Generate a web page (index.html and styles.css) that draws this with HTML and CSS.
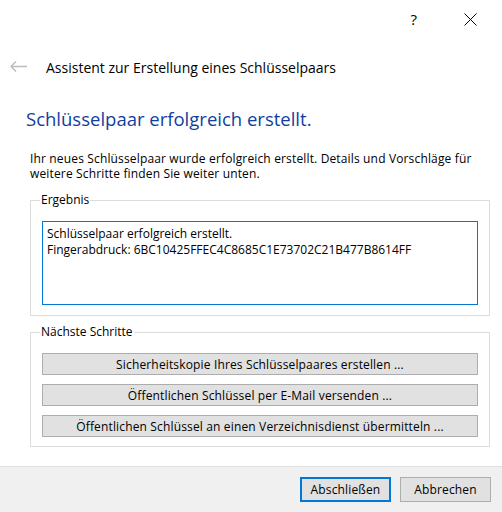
FILE: index.html
```html
<!DOCTYPE html>
<html lang="de">
<head>
<meta charset="utf-8">
<title>Assistent zur Erstellung eines Schlüsselpaars</title>
<link rel="stylesheet" href="styles.css">
</head>
<body>
<div class="dialog">
  <div class="topbar">
    <span class="help">?</span>
    <svg class="close" width="13" height="13" viewBox="0 0 13 13" aria-hidden="true">
      <path d="M0.5 0.5 L12.5 12.5 M12.5 0.5 L0.5 12.5" stroke="#000" stroke-width="1" fill="none"/>
    </svg>
  </div>
  <div class="titlerow">
    <svg class="back" width="17" height="11" viewBox="0 0 17 11" aria-hidden="true">
      <path d="M1 5.5 H17 M1 5.5 L6 0.5 M1 5.5 L6 10.5" stroke="#bdbdbd" stroke-width="1.5" fill="none"/>
    </svg>
    <span class="title">Assistent zur Erstellung eines Schlüsselpaars</span>
  </div>
  <main class="content">
    <h1 class="heading">Schlüsselpaar erfolgreich erstellt.</h1>
    <p class="intro">Ihr neues Schlüsselpaar wurde erfolgreich erstellt. Details und Vorschläge für weitere Schritte finden Sie weiter unten.</p>
    <fieldset class="group">
      <legend class="group-label">Ergebnis</legend>
      <div class="result">Schlüsselpaar erfolgreich erstellt.<br>Fingerabdruck: 6BC10425FFEC4C8685C1E73702C21B477B8614FF</div>
    </fieldset>
    <fieldset class="group group-steps">
      <legend class="group-label">Nächste Schritte</legend>
      <div class="steps">
        <button class="step-btn" type="button">Sicherheitskopie Ihres Schlüsselpaares erstellen ...</button>
        <button class="step-btn" type="button">Öffentlichen Schlüssel per E-Mail versenden ...</button>
        <button class="step-btn" type="button">Öffentlichen Schlüssel an einen Verzeichnisdienst übermitteln ...</button>
      </div>
    </fieldset>
  </main>
  <footer class="footer">
    <button class="btn btn-default" type="button">Abschließen</button>
    <button class="btn" type="button">Abbrechen</button>
  </footer>
</div>
</body>
</html>
```
FILE: styles.css
```css
html, body {
  margin: 0;
  padding: 0;
  background: #ffffff;
}

body {
  font-family: "Open Sans", "Liberation Sans", Arial, sans-serif;
  font-size: 12px;
  letter-spacing: 0.1px;
  color: #000000;
}

.dialog {
  display: flex;
  flex-direction: column;
  width: 502px;
  height: 512px;
  overflow: hidden;
}

.topbar {
  height: 38px;
  display: flex;
  align-items: center;
  justify-content: flex-end;
  gap: 47px;
  padding-right: 25px;
}

.help {
  font-size: 15px;
  line-height: 1;
  letter-spacing: 0;
  color: #000;
}

.close {
  display: block;
}

.titlerow {
  height: 24px;
  margin-top: 17px;
  display: flex;
  align-items: center;
}

.back {
  display: block;
  margin-left: 10px;
  margin-right: 19px;
  margin-bottom: 2px;
}

.title {
  font-size: 14px;
  letter-spacing: 0;
  color: #000;
}

.content {
  padding: 0 12px 0 30px;
}

.heading {
  margin: 26px 0 18px -4px;
  font-size: 18.5px;
  letter-spacing: 0;
  line-height: 28px;
  font-weight: normal;
  color: #123e9e;
}

.intro {
  margin: 0 0 11px 0;
  line-height: 15px;
  letter-spacing: 0.15px;
}

.group {
  margin: 0;
  padding: 13px 11px 10px 11px;
  border: 1px solid #dcdcdc;
  min-width: 0;
}

.group-steps {
  margin-top: 8px;
  padding-bottom: 9px;
}

.group-label {
  margin-left: -2px;
  padding: 0 1px;
  line-height: 16px;
  font-size: 12px;
  letter-spacing: 0;
}

.result {
  box-sizing: border-box;
  height: 84px;
  border: 1px solid #0078d7;
  padding: 4px 4px;
  line-height: 16px;
  letter-spacing: 0;
}

.steps {
  display: flex;
  flex-direction: column;
  gap: 9px;
}

.step-btn,
.btn {
  font-family: inherit;
  font-size: 12px;
  letter-spacing: 0.15px;
  color: #000;
  background: #e1e1e1;
  border: 1px solid #adadad;
  border-radius: 0;
  padding: 0;
  margin: 0;
}

.step-btn {
  height: 22px;
  width: 100%;
}

.footer {
  margin-top: auto;
  box-sizing: border-box;
  height: 46px;
  border-top: 1px solid #dfdfdf;
  background: #f0f0f0;
  display: flex;
  justify-content: flex-end;
  align-items: flex-start;
  gap: 9px;
  padding: 10px 11px 0 0;
}

.btn {
  box-sizing: border-box;
  width: 91px;
  height: 25px;
}

.btn-default {
  border: 2px solid #0078d7;
}
```
